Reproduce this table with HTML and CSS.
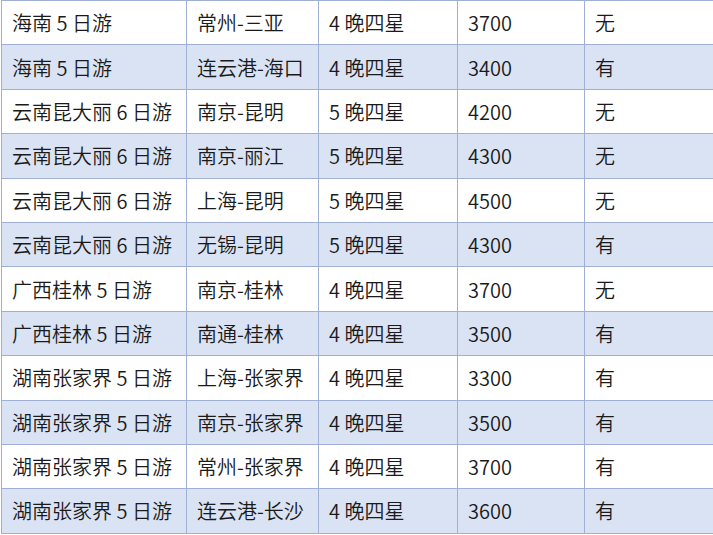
FILE: index.html
```html
<!DOCTYPE html>
<html lang="zh-CN">
<head>
<meta charset="utf-8">
<title>旅游线路</title>
<link rel="stylesheet" href="styles.css">
</head>
<body>
<table class="tours">
  <colgroup>
    <col class="c1"><col class="c2"><col class="c3"><col class="c4"><col class="c5">
  </colgroup>
  <tbody>
    <tr><td>海南 5 日游</td><td>常州-三亚</td><td>4 晚四星</td><td>3700</td><td>无</td></tr>
    <tr class="alt"><td>海南 5 日游</td><td>连云港-海口</td><td>4 晚四星</td><td>3400</td><td>有</td></tr>
    <tr><td>云南昆大丽 6 日游</td><td>南京-昆明</td><td>5 晚四星</td><td>4200</td><td>无</td></tr>
    <tr class="alt"><td>云南昆大丽 6 日游</td><td>南京-丽江</td><td>5 晚四星</td><td>4300</td><td>无</td></tr>
    <tr><td>云南昆大丽 6 日游</td><td>上海-昆明</td><td>5 晚四星</td><td>4500</td><td>无</td></tr>
    <tr class="alt"><td>云南昆大丽 6 日游</td><td>无锡-昆明</td><td>5 晚四星</td><td>4300</td><td>有</td></tr>
    <tr><td>广西桂林 5 日游</td><td>南京-桂林</td><td>4 晚四星</td><td>3700</td><td>无</td></tr>
    <tr class="alt"><td>广西桂林 5 日游</td><td>南通-桂林</td><td>4 晚四星</td><td>3500</td><td>有</td></tr>
    <tr><td>湖南张家界 5 日游</td><td>上海-张家界</td><td>4 晚四星</td><td>3300</td><td>有</td></tr>
    <tr class="alt"><td>湖南张家界 5 日游</td><td>南京-张家界</td><td>4 晚四星</td><td>3500</td><td>有</td></tr>
    <tr><td>湖南张家界 5 日游</td><td>常州-张家界</td><td>4 晚四星</td><td>3700</td><td>有</td></tr>
    <tr class="alt"><td>湖南张家界 5 日游</td><td>连云港-长沙</td><td>4 晚四星</td><td>3600</td><td>有</td></tr>
  </tbody>
</table>
</body>
</html>
```

FILE: styles.css
```css
html, body {
  margin: 0;
  padding: 0;
  background: #ffffff;
  overflow: hidden;
}

.tours {
  margin: 0 0 0 1px;
  border-collapse: collapse;
  table-layout: fixed;
  width: 712px;
  font-family: "Noto Sans CJK SC", "Noto Sans", sans-serif;
  font-size: 20px;
  font-weight: 350;
  color: #1a1a1a;
}

.c1 { width: 185px; }
.c2 { width: 132px; }
.c3 { width: 139px; }
.c4 { width: 127px; }
.c5 { width: 129px; }

.tours td {
  height: 44.4px;
  padding: 1px 0 0 10px;
  border: 1px solid #9fb0d4;
  white-space: nowrap;
  vertical-align: middle;
  line-height: 24px;
  box-sizing: border-box;
}

.tours td:last-child {
  border-right: none;
}

.tours tr.alt td {
  background: #dae3f3;
}
```
